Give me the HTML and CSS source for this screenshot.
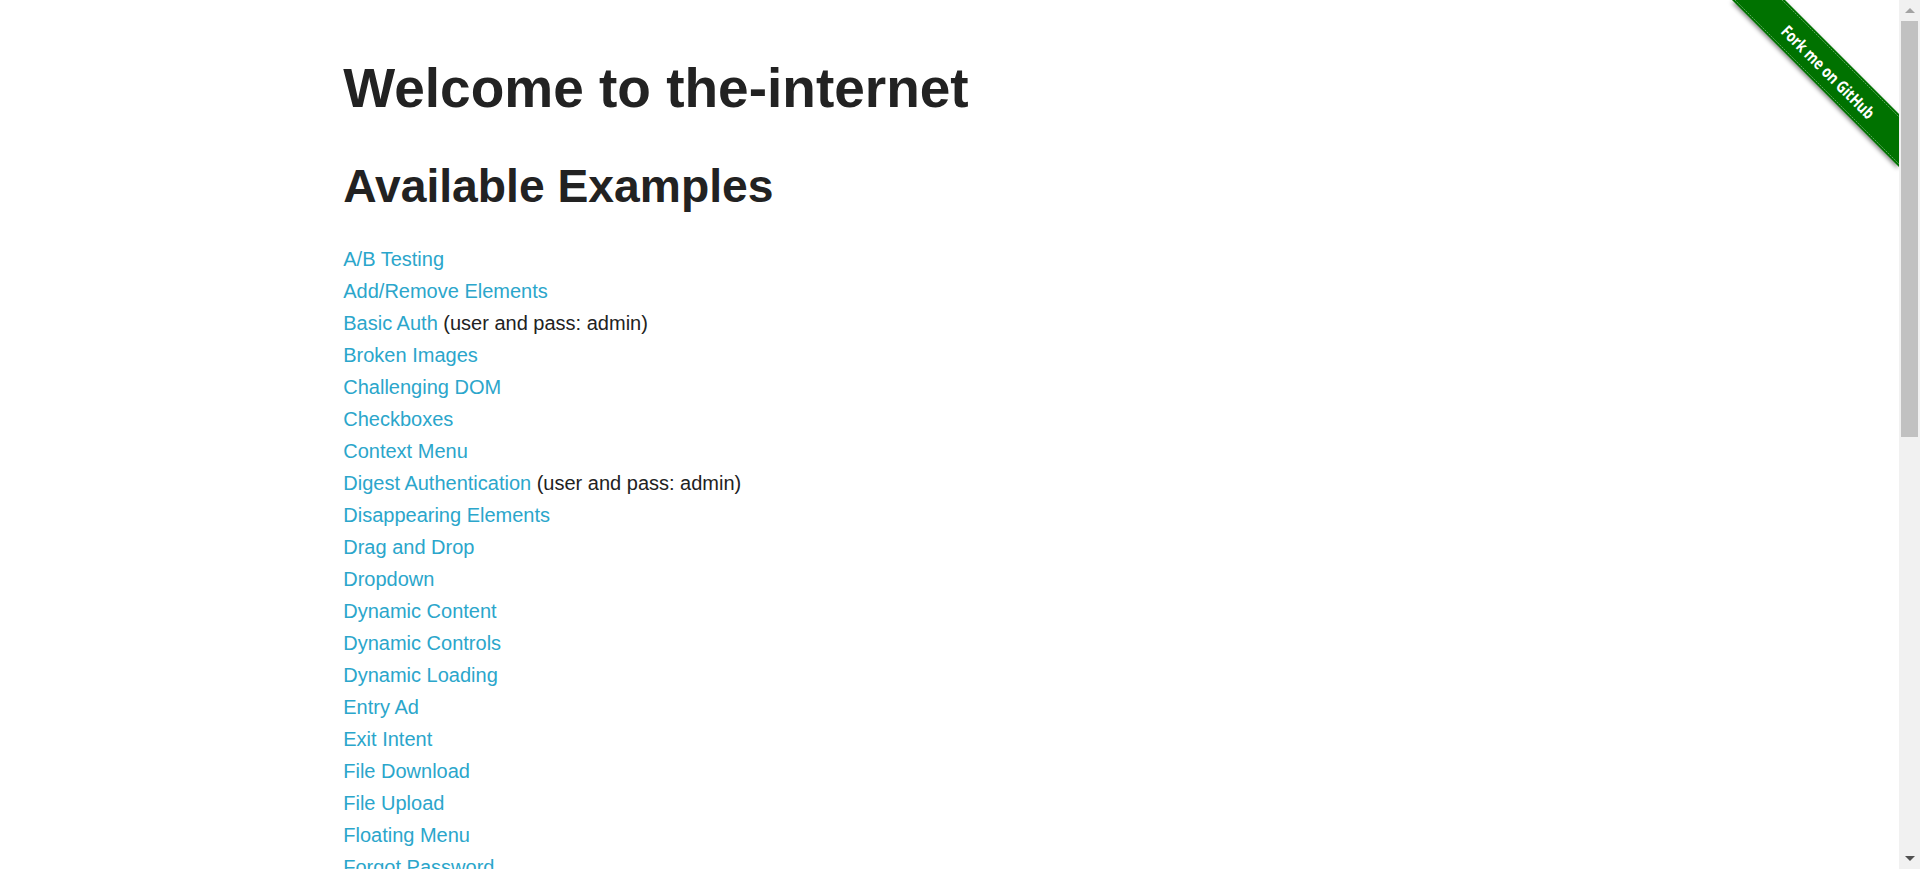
FILE: index.html
```html
<!DOCTYPE html>
<html lang="en">
<head>
<meta charset="utf-8">
<title>The Internet</title>
<link rel="stylesheet" href="styles.css">
</head>
<body>
<a class="ribbon" href="#" aria-label="Fork me on GitHub">
  <svg width="186" height="186" viewBox="0 0 186 186">
    <defs>
      <filter id="sh" x="-20%" y="-20%" width="140%" height="140%">
        <feDropShadow dx="-1" dy="2" stdDeviation="2" flood-color="#000" flood-opacity="0.45"/>
      </filter>
    </defs>
    <polygon points="19,0 72,0 186,114 186,167" fill="#007200" filter="url(#sh)"/>
    <line x1="22" y1="0" x2="186" y2="164" stroke="#ffffff" stroke-opacity="0.35" stroke-width="1" stroke-dasharray="2 1"/>
    <line x1="69" y1="0" x2="186" y2="117" stroke="#ffffff" stroke-opacity="0.35" stroke-width="1" stroke-dasharray="2 1"/>
    <text x="115" y="78" transform="rotate(45 115 72)" text-anchor="middle" textLength="124" lengthAdjust="spacingAndGlyphs" class="ribbon-text">Fork me on GitHub</text>
  </svg>
</a>
<div class="scrollbar" aria-hidden="true">
  <div class="sb-up"></div>
  <div class="sb-track"><div class="sb-thumb"></div></div>
  <div class="sb-down"></div>
</div>
<div class="row">
  <div class="columns">
    <h1 class="heading">Welcome to the-internet</h1>
    <h2 class="subheading">Available Examples</h2>
    <ul class="examples">
      <li><a href="#">A/B Testing</a></li>
      <li><a href="#">Add/Remove Elements</a></li>
      <li><a href="#">Basic Auth</a> (user and pass: admin)</li>
      <li><a href="#">Broken Images</a></li>
      <li><a href="#">Challenging DOM</a></li>
      <li><a href="#">Checkboxes</a></li>
      <li><a href="#">Context Menu</a></li>
      <li><a href="#">Digest Authentication</a> (user and pass: admin)</li>
      <li><a href="#">Disappearing Elements</a></li>
      <li><a href="#">Drag and Drop</a></li>
      <li><a href="#">Dropdown</a></li>
      <li><a href="#">Dynamic Content</a></li>
      <li><a href="#">Dynamic Controls</a></li>
      <li><a href="#">Dynamic Loading</a></li>
      <li><a href="#">Entry Ad</a></li>
      <li><a href="#">Exit Intent</a></li>
      <li><a href="#">File Download</a></li>
      <li><a href="#">File Upload</a></li>
      <li><a href="#">Floating Menu</a></li>
      <li><a href="#">Forgot Password</a></li>
      <li><a href="#">Form Authentication</a></li>
      <li><a href="#">Frames</a></li>
      <li><a href="#">Geolocation</a></li>
      <li><a href="#">Horizontal Slider</a></li>
      <li><a href="#">Hovers</a></li>
      <li><a href="#">Infinite Scroll</a></li>
      <li><a href="#">Inputs</a></li>
      <li><a href="#">JQuery UI Menus</a></li>
      <li><a href="#">JavaScript Alerts</a></li>
      <li><a href="#">JavaScript onload event error</a></li>
      <li><a href="#">Key Presses</a></li>
      <li><a href="#">Large &amp; Deep DOM</a></li>
      <li><a href="#">Multiple Windows</a></li>
      <li><a href="#">Nested Frames</a></li>
      <li><a href="#">Notification Messages</a></li>
      <li><a href="#">Redirect Link</a></li>
      <li><a href="#">Secure File Download</a></li>
      <li><a href="#">Shadow DOM</a></li>
      <li><a href="#">Shifting Content</a></li>
      <li><a href="#">Slow Resources</a></li>
      <li><a href="#">Sortable Data Tables</a></li>
      <li><a href="#">Status Codes</a></li>
      <li><a href="#">Typos</a></li>
      <li><a href="#">WYSIWYG Editor</a></li>
    </ul>
  </div>
</div>
<div class="row footer">
  <div class="columns footer-col">
    <hr class="rule">
    <div class="powered">Powered by <a href="#">Elemental Selenium</a></div>
  </div>
</div>
</body>
</html>
```
FILE: styles.css
```css
html::-webkit-scrollbar {
  display: none;
}
body {
  margin: 0;
  padding-right: 21px;
  background: #ffffff;
  color: #222222;
  font-family: "Liberation Sans", Arial, Helvetica, sans-serif;
  font-size: 20px;
  line-height: 32px;
  position: relative;
}
a {
  color: #2ba6cb;
  text-decoration: none;
}
.row {
  max-width: 1250px;
  margin: 0 auto;
}
.columns {
  padding: 0 18.75px;
}
.heading {
  margin: 55px 0 0;
  font-size: 55px;
  line-height: 66px;
  font-weight: 700;
  color: #222222;
}
.subheading {
  margin: 38px 0 0;
  font-size: 46.25px;
  line-height: 55.5px;
  font-weight: 700;
  color: #222222;
}
.examples {
  margin: 28px 0 0;
  padding: 0;
  list-style: none;
}
.examples li {
  line-height: 32px;
}
.footer {
  margin-top: 20px;
  padding-bottom: 20px;
}
.footer-col {
  max-width: 416px;
  margin: 0 auto;
}
.rule {
  border: 0;
  border-top: 1px solid #dddddd;
  margin: 25px 0 24px;
}
.powered {
  text-align: center;
}
.ribbon {
  position: absolute;
  top: 0;
  right: 21px;
  width: 186px;
  height: 186px;
  display: block;
}
.ribbon svg {
  display: block;
}
.ribbon-text {
  fill: #ffffff;
  font-family: "Open Sans", "Noto Sans", sans-serif;
  font-weight: 700;
  font-size: 16.5px;
}
.scrollbar {
  position: fixed;
  top: 0;
  right: 0;
  width: 21px;
  height: 100vh;
  background: #f1f1f1;
  display: flex;
  flex-direction: column;
  z-index: 10;
}
.sb-up,
.sb-down {
  height: 21px;
  flex: none;
  display: flex;
  justify-content: center;
  align-items: center;
}
.sb-up::before {
  content: "";
  border-left: 5px solid transparent;
  border-right: 5px solid transparent;
  border-bottom: 5px solid #a3a3a3;
}
.sb-down::before {
  content: "";
  border-left: 5px solid transparent;
  border-right: 5px solid transparent;
  border-top: 5px solid #505050;
}
.sb-track {
  flex: 1;
  padding: 0 2px;
}
.sb-thumb {
  height: 416px;
  background: #c1c1c1;
}
```
